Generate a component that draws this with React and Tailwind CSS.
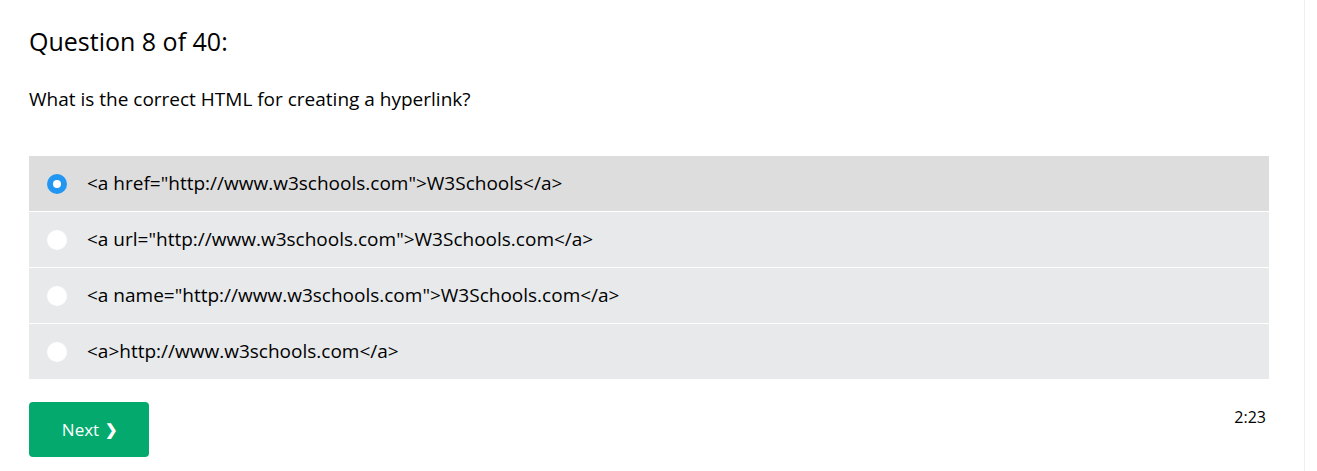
const OPTIONS = [
  '<a href="http://www.w3schools.com">W3Schools</a>',
  '<a url="http://www.w3schools.com">W3Schools.com</a>',
  '<a name="http://www.w3schools.com">W3Schools.com</a>',
  "<a>http://www.w3schools.com</a>",
];

export default function App() {
  const selected = 0;

  return (
    <div className="flex min-h-[471px] bg-white font-['Open_Sans',sans-serif] text-black">
      <div className="w-[1305px] border-r border-[#eeeeee] pl-[29px] pr-[35px]">
        <h2 className="mt-[25px] text-[25px] leading-[32px]">Question 8 of 40:</h2>
        <p className="mt-[30px] text-[19px] leading-[24px]">What is the correct HTML for creating a hyperlink?</p>

        <div className="mt-[45px] flex flex-col gap-px">
          {OPTIONS.map((opt, i) => (
            <label
              key={i}
              className={`flex h-[55px] items-center gap-[20px] pl-[18px] text-[19px] ${
                i === selected ? "bg-[#dddddd]" : "bg-[#e7e9eb]"
              }`}
            >
              {i === selected ? (
                <span className="flex h-[20px] w-[20px] items-center justify-center rounded-full bg-[#2196f3]">
                  <span className="h-[8px] w-[8px] rounded-full bg-white" />
                </span>
              ) : (
                <span className="h-[20px] w-[20px] rounded-full bg-white" />
              )}
              <span>{opt}</span>
            </label>
          ))}
        </div>

        <div className="mt-[23px] flex items-start justify-between">
          <button className="flex h-[55px] w-[120px] items-center justify-center gap-1.5 rounded-[4px] bg-[#04aa6d] pl-[2px] text-[17px] text-white">
            Next <span className="text-[15px] font-bold">❯</span>
          </button>
          <span className="mr-[3px] mt-[4px] text-[16px] leading-[22px]">2:23</span>
        </div>
      </div>
    </div>
  );
}
